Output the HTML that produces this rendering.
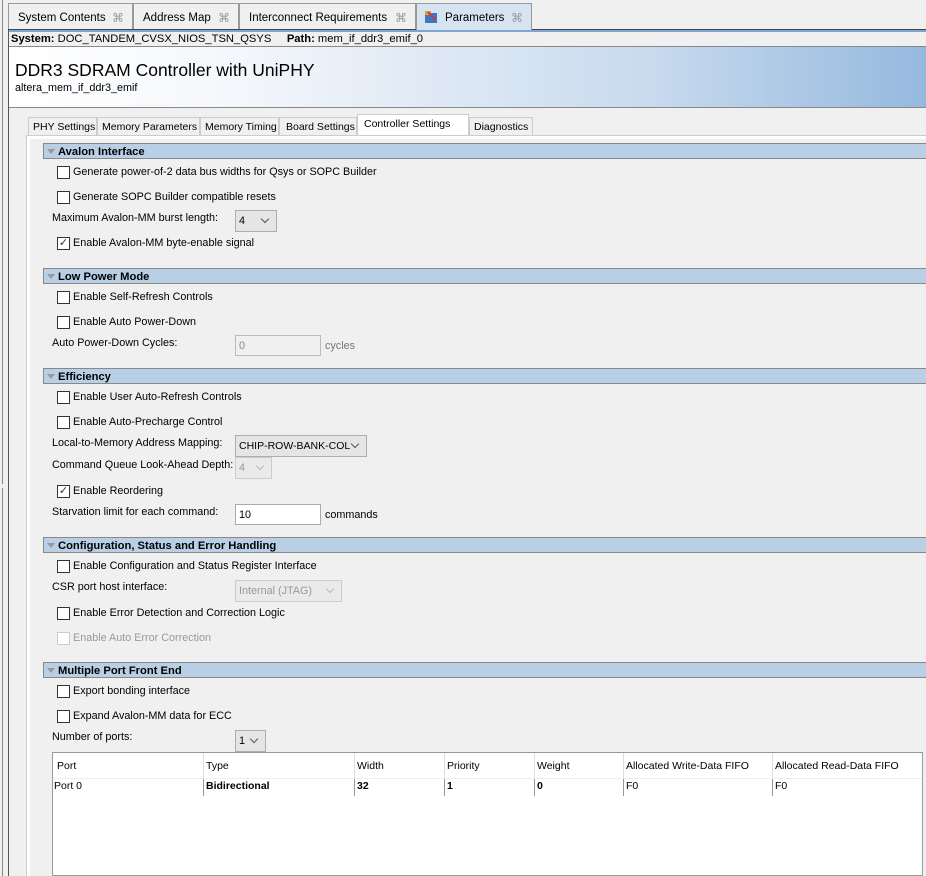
<!DOCTYPE html>
<html><head><meta charset="utf-8"><style>
*{margin:0;padding:0;box-sizing:border-box}
body{width:926px;height:876px;overflow:hidden;background:#f0f0f0;font-family:"Liberation Sans",Tahoma,sans-serif;font-size:10.8px;color:#000;position:relative}
.a{position:absolute;white-space:nowrap}
.tab{position:absolute;top:3px;height:27px;border:1px solid #999;border-bottom:none;background:#f0f0f0;font-size:11.5px;padding:8px 0 0 9px;white-space:nowrap}
.tab .x{position:absolute;right:8px;top:7px;color:#999;font-size:12px}
.sec{position:absolute;left:43px;right:0;height:16px;background:#b8cfe5;border-top:1px solid #888;border-bottom:1px solid #888;border-left:1px solid #888;font-weight:bold;font-size:11.2px;padding:2px 0 0 14px;white-space:nowrap}
.sec:before{content:"";position:absolute;left:3px;top:5px;border-left:4px solid transparent;border-right:4px solid transparent;border-top:5px solid #999}
.cb{position:absolute;left:57px;width:13px;height:13px;border:1px solid #333;background:#fff}
.cb.d{border-color:#ccc}
.lab{position:absolute;left:73px;white-space:nowrap}
.lbl{position:absolute;left:52px;white-space:nowrap}
.dd{position:absolute;border:1px solid #adadad;background:#e5e5e5;padding:4px 0 0 3px;height:22px;white-space:nowrap}
.dd:after{content:"";position:absolute;right:8px;top:5px;width:5px;height:5px;border-right:1px solid #555;border-bottom:1px solid #555;transform:rotate(45deg)}
.dd.g{color:#999;background:#eaeaea;border-color:#ccc}
.dd.g:after{border-color:#bbb}
.tb{position:absolute;border:1px solid #aaa;background:#fff;height:21px;padding:4px 0 0 3px}
.st{position:absolute;top:117px;height:18px;border:1px solid #ccc;border-bottom:none;padding:3px 0 0 4px;font-size:10.5px;background:#f0f0f0;white-space:nowrap;overflow:hidden}
.td{position:absolute;top:0;height:100%;border-left:1px solid #ddd;padding-left:2px;white-space:nowrap}
</style></head><body>
<div class="a" style="left:2px;top:0;width:1px;height:484px;background:#888"></div>
<div class="a" style="left:2px;top:488px;width:1px;height:388px;background:#888"></div>
<div class="a" style="left:8px;top:3px;width:1px;height:873px;background:#555"></div>
<div class="tab" style="left:8px;width:125px">System Contents<span class="x">⌘</span></div>
<div class="tab" style="left:133px;width:106px">Address Map<span class="x">⌘</span></div>
<div class="tab" style="left:239px;width:177px">Interconnect Requirements<span class="x">⌘</span></div>
<div class="tab" style="left:416px;width:116px;background:#d6e4f2;padding-left:28px">Parameters<span class="x">⌘</span>
<svg style="position:absolute;left:7px;top:6px" width="14" height="14"><rect x="1" y="3" width="12" height="10" fill="#3a78c8"/><rect x="1" y="1" width="6" height="4" fill="#e8a030"/><path d="M4 2 L11 10" stroke="#d33" stroke-width="2"/></svg></div>
<div class="a" style="left:532px;top:29px;right:0;height:1px;background:#444"></div>
<div class="a" style="left:8px;top:29px;width:408px;height:1px;background:#444"></div>
<div class="a" style="left:9px;top:30px;right:0;height:2px;background:#7fa6d3"></div>
<div class="a" style="left:11px;top:33px;font-size:11.2px"><b>System:</b> DOC_TANDEM_CVSX_NIOS_TSN_QSYS &nbsp;&nbsp;&nbsp;&nbsp;<b>Path:</b> mem_if_ddr3_emif_0</div>
<div class="a" style="left:9px;top:46px;right:0;height:62px;border-top:1px solid #888;border-bottom:1px solid #888;background:linear-gradient(to right,#fff 0%,#f4f7fb 25%,#c8daee 70%,#95b9de 100%)"></div>
<div class="a" style="left:15px;top:60px;font-size:17.5px">DDR3 SDRAM Controller with UniPHY</div>
<div class="a" style="left:15px;top:82px;font-size:10.8px">altera_mem_if_ddr3_emif</div>
<div class="st" style="left:28px;width:69px">PHY Settings</div>
<div class="st" style="left:97px;width:103px">Memory Parameters</div>
<div class="st" style="left:200px;width:79px">Memory Timing</div>
<div class="st" style="left:279px;width:78px;padding-left:6px">Board Settings</div>
<div class="st" style="left:357px;width:112px;top:114px;height:22px;background:#fff;padding:3px 0 0 6px">Controller Settings</div>
<div class="st" style="left:469px;width:64px">Diagnostics</div>
<div class="a" style="left:26px;top:135px;right:0;height:741px;border-left:1px solid #ccc;border-top:1px solid #ccc"></div>
<div class="a" style="left:27px;top:136px;right:0;height:3px;background:#fff"></div>
<div class="a" style="left:27px;top:136px;width:3px;height:740px;background:#fff"></div>

<div class="sec" style="top:143px">Avalon Interface</div>
<div class="cb" style="top:166px"></div><div class="lab" style="top:166px">Generate power-of-2 data bus widths for Qsys or SOPC Builder</div>
<div class="cb" style="top:191px"></div><div class="lab" style="top:191px">Generate SOPC Builder compatible resets</div>
<div class="lbl" style="top:212px">Maximum Avalon-MM burst length:</div>
<div class="dd" style="left:235px;top:210px;width:42px">4</div>
<div class="cb" style="top:237px;font-size:11px;line-height:10px;text-align:center;color:#333">✓</div><div class="lab" style="top:237px">Enable Avalon-MM byte-enable signal</div>

<div class="sec" style="top:268px">Low Power Mode</div>
<div class="cb" style="top:291px"></div><div class="lab" style="top:291px">Enable Self-Refresh Controls</div>
<div class="cb" style="top:316px"></div><div class="lab" style="top:316px">Enable Auto Power-Down</div>
<div class="lbl" style="top:337px">Auto Power-Down Cycles:</div>
<div class="tb" style="left:235px;top:335px;width:86px;color:#888;background:#f0f0f0;border-color:#bbb">0</div>
<div class="a" style="left:325px;top:340px;color:#777">cycles</div>

<div class="sec" style="top:368px">Efficiency</div>
<div class="cb" style="top:391px"></div><div class="lab" style="top:391px">Enable User Auto-Refresh Controls</div>
<div class="cb" style="top:416px"></div><div class="lab" style="top:416px">Enable Auto-Precharge Control</div>
<div class="lbl" style="top:437px">Local-to-Memory Address Mapping:</div>
<div class="dd" style="left:235px;top:435px;width:132px;font-size:10.5px">CHIP-ROW-BANK-COL</div>
<div class="lbl" style="top:459px">Command Queue Look-Ahead Depth:</div>
<div class="dd g" style="left:235px;top:457px;width:37px">4</div>
<div class="cb" style="top:485px;font-size:11px;line-height:10px;text-align:center;color:#333">✓</div><div class="lab" style="top:485px">Enable Reordering</div>
<div class="lbl" style="top:506px">Starvation limit for each command:</div>
<div class="tb" style="left:235px;top:504px;width:86px">10</div>
<div class="a" style="left:325px;top:509px">commands</div>

<div class="sec" style="top:537px">Configuration, Status and Error Handling</div>
<div class="cb" style="top:560px"></div><div class="lab" style="top:560px">Enable Configuration and Status Register Interface</div>
<div class="lbl" style="top:581px">CSR port host interface:</div>
<div class="dd g" style="left:235px;top:580px;width:107px">Internal (JTAG)</div>
<div class="cb" style="top:607px"></div><div class="lab" style="top:607px">Enable Error Detection and Correction Logic</div>
<div class="cb d" style="top:632px"></div><div class="lab" style="top:632px;color:#999">Enable Auto Error Correction</div>

<div class="sec" style="top:662px">Multiple Port Front End</div>
<div class="cb" style="top:685px"></div><div class="lab" style="top:685px">Export bonding interface</div>
<div class="cb" style="top:710px"></div><div class="lab" style="top:710px">Expand Avalon-MM data for ECC</div>
<div class="lbl" style="top:731px">Number of ports:</div>
<div class="dd" style="left:235px;top:730px;width:31px">1</div>

<div class="a" style="left:52px;top:752px;width:871px;height:124px;border:1px solid #999;background:#fff;font-size:10.5px">
<div class="a" style="left:0;top:0;width:100%;height:26px;border-bottom:1px solid #eee">
 <div class="td" style="left:0;border:none;padding:7px 0 0 4px">Port</div>
 <div class="td" style="left:150px;padding-top:7px">Type</div>
 <div class="td" style="left:301px;padding-top:7px">Width</div>
 <div class="td" style="left:391px;padding-top:7px">Priority</div>
 <div class="td" style="left:481px;padding-top:7px">Weight</div>
 <div class="td" style="left:570px;padding-top:7px">Allocated Write-Data FIFO</div>
 <div class="td" style="left:719px;padding-top:7px">Allocated Read-Data FIFO</div>
</div>
<div class="a" style="left:0;top:26px;width:100%;height:17px">
 <div class="td" style="left:0;border:none;padding:1px 0 0 1px">Port 0</div>
 <div class="td" style="left:150px;border-color:#999;font-weight:bold;padding-top:1px">Bidirectional</div>
 <div class="td" style="left:301px;border-color:#999;font-weight:bold;padding-top:1px">32</div>
 <div class="td" style="left:391px;border-color:#999;font-weight:bold;padding-top:1px">1</div>
 <div class="td" style="left:481px;border-color:#999;font-weight:bold;padding-top:1px">0</div>
 <div class="td" style="left:570px;border-color:#999;padding-top:1px">F0</div>
 <div class="td" style="left:719px;border-color:#999;padding-top:1px">F0</div>
</div>
</div>
</body></html>
